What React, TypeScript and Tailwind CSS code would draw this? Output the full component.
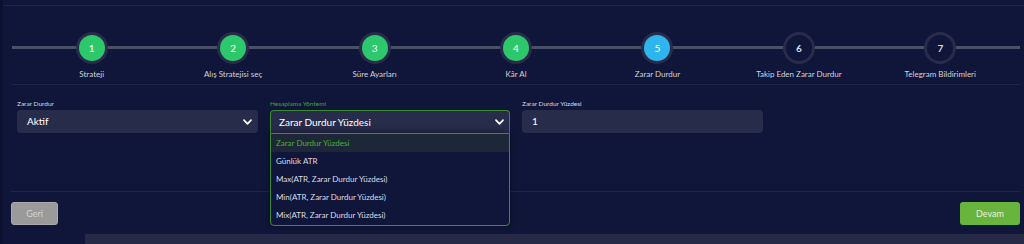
import React from "react";

const steps = [
  { n: 1, label: "Strateji", state: "done" },
  { n: 2, label: "Alış Stratejisi seç", state: "done" },
  { n: 3, label: "Süre Ayarları", state: "done" },
  { n: 4, label: "Kâr Al", state: "done" },
  { n: 5, label: "Zarar Durdur", state: "active" },
  { n: 6, label: "Takip Eden Zarar Durdur", state: "todo" },
  { n: 7, label: "Telegram Bildirimleri", state: "todo" },
];

const options = [
  "Zarar Durdur Yüzdesi",
  "Günlük ATR",
  "Max(ATR, Zarar Durdur Yüzdesi)",
  "Min(ATR, Zarar Durdur Yüzdesi)",
  "Mix(ATR, Zarar Durdur Yüzdesi)",
];

function Chevron() {
  return (
    <svg width="9" height="6" viewBox="0 0 9 6" className="shrink-0">
      <polyline points="1,1.2 4.5,4.8 8,1.2" fill="none" stroke="#ffffff" strokeWidth="1.7" strokeLinecap="round" strokeLinejoin="round" />
    </svg>
  );
}

export default function App() {
  return (
    <div
      className="w-[1024px] h-[244px] flex bg-[#262a47] overflow-hidden"
      style={{ fontFamily: "Lato, 'Open Sans', sans-serif" }}
    >
      <div className="w-[3px] h-full bg-[#0c1131] shrink-0" />
      <div className="flex-1 flex flex-col">
        <div className="h-[234px] bg-[#10163a] flex flex-col relative">
          <div className="h-[6px] border-b border-[#1f2548]" />
          {/* stepper */}
          <div className="relative ml-[9px] mr-[4px] h-[79px] border-b border-[#1f2548]">
            <div className="absolute left-0 right-0 top-[40px] h-[3px] bg-[#4b5069]" />
            <div className="relative grid grid-cols-7 px-[9px] pt-[26px]">
              {steps.map((s) => (
                <div key={s.n} className="flex flex-col items-center">
                  <div className="w-[32px] h-[32px] rounded-full bg-[#282c4a] flex items-center justify-center">
                    <div
                      className={
                        s.state === "done"
                          ? "w-[26px] h-[26px] rounded-full bg-[#2dc86c] flex items-center justify-center text-[10px] text-white"
                          : s.state === "active"
                          ? "w-[26px] h-[26px] rounded-full bg-[#2eb5ee] flex items-center justify-center text-[10px] text-white"
                          : "w-[26px] h-[26px] rounded-full bg-[#10163a] flex items-center justify-center text-[10px] font-bold text-[#d6d8e2]"
                      }
                    >
                      {s.n}
                    </div>
                  </div>
                  <div className="mt-[5px] text-[8px] leading-[10px] text-[#d0d3de] whitespace-nowrap">{s.label}</div>
                </div>
              ))}
            </div>
          </div>
          {/* form */}
          <div className="flex pl-[14px] pt-[14px] h-[106px]">
            <div className="flex flex-col w-[241px]">
              <div className="text-[6.5px] leading-[9px] text-[#d8dae4] mb-[2px]">Zarar Durdur</div>
              <div className="h-[23px] rounded-[4px] bg-[#282c4b] flex items-center justify-between pl-[10px] pr-[6px]">
                <span className="text-[10px] text-white">Aktif</span>
                <Chevron />
              </div>
            </div>
            <div className="flex flex-col relative w-[240px] ml-[12px]">
              <div className="text-[6.5px] leading-[9px] text-[#4f9f3c] mb-[2px]">Hesaplama Yöntemi</div>
              <div className="h-[23px] rounded-t-[4px] bg-[#282c4b] border border-[#3e8c32] border-b-0 flex items-center justify-between pl-[8px] pr-[5px]">
                <span className="text-[10px] text-white">Zarar Durdur Yüzdesi</span>
                <Chevron />
              </div>
              <div className="absolute left-0 right-0 top-[34px] z-10 bg-[#10163a] border border-[#3e8c32] rounded-b-[4px] pb-[1px] shadow-[0_0_6px_rgba(0,0,0,0.5)]">
                {options.map((o, i) => (
                  <div
                    key={o}
                    className={
                      i === 0
                        ? "h-[18px] flex items-center pl-[5px] text-[8px] text-[#56a83a] bg-[#1c2838]"
                        : "h-[18px] flex items-center pl-[5px] text-[8px] text-[#dcdde6]"
                    }
                  >
                    {o}
                  </div>
                ))}
              </div>
            </div>
            <div className="flex flex-col w-[241px] ml-[12px]">
              <div className="text-[6.5px] leading-[9px] text-[#d8dae4] mb-[2px]">Zarar Durdur Yüzdesi</div>
              <div className="h-[23px] rounded-[4px] bg-[#282c4b] flex items-center pl-[10px]">
                <span className="text-[10px] text-white">1</span>
              </div>
            </div>
          </div>
          <div className="h-px ml-[8px] mr-[4px] bg-[#1f2548]" />
          {/* footer */}
          <div className="flex justify-between items-start pl-[8px] pr-[4px] pt-[10px]">
            <div className="w-[47px] h-[23px] rounded-[3px] bg-[#9a9a9a] border border-[#aaaaaa] flex items-center justify-center text-[9px] text-[#d4d4d4]">
              Geri
            </div>
            <div className="w-[60px] h-[23px] rounded-[3px] bg-[#68b43c] flex items-center justify-center text-[9px] text-[#e8f2e0]">
              Devam
            </div>
          </div>
        </div>
        <div className="flex-1 flex">
          <div className="w-[82px] bg-[#10163a]" />
          <div className="flex-1 bg-[#262a47]" />
        </div>
      </div>
    </div>
  );
}
